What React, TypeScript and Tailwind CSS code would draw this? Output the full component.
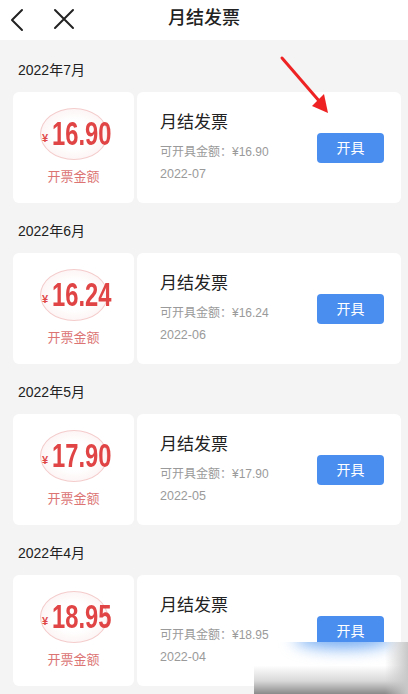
import React from "react";

const invoices = [
  { month: "2022年7月", amount: "16.90", date: "2022-07" },
  { month: "2022年6月", amount: "16.24", date: "2022-06" },
  { month: "2022年5月", amount: "17.90", date: "2022-05" },
  { month: "2022年4月", amount: "18.95", date: "2022-04" },
];

const font = "font-['Liberation_Sans','Noto_Sans_CJK_SC',sans-serif]";

function InvoiceRow({ month, amount, date }: { month: string; amount: string; date: string }) {
  return (
    <div className="pt-[18px]">
      <div className="h-[20px] pl-[18px] text-[14px] leading-[20px] text-[#222]">{month}</div>
      <div className="mt-[12px] flex gap-[3px] pl-[13px] pr-[7px]">
        <div className="flex h-[111px] w-[121px] flex-col items-center rounded-[6px] bg-white">
          <div className="mt-[16px] flex h-[52px] w-[68px] items-center justify-center rounded-[50%] border border-[#f4cccc] bg-[radial-gradient(ellipse_at_center,#fff_40%,#fcecec)]">
            <div className="ml-[6px] flex shrink-0 items-center">
              <span className="mr-[4px] mt-[8px] text-[11px] font-bold text-[#e04848]">¥</span>
              <div className="w-[59px]">
                <span className="inline-block origin-left scale-x-[0.72] whitespace-nowrap text-[33px] font-bold leading-none text-[#e04444]">
                  {amount}
                </span>
              </div>
            </div>
          </div>
          <div className="mt-[8px] text-[13px] leading-[18px] text-[#dc7474]">开票金额</div>
        </div>
        <div className="flex h-[111px] flex-1 items-center rounded-[6px] bg-white pl-[23px] pr-[17px]">
          <div className="flex-1">
            <div className="text-[17px] leading-[22px] text-[#222]">月结发票</div>
            <div className="mt-[10px] text-[12px] leading-[16px] text-[#9a9a9a]">可开具金额：¥{amount}</div>
            <div className="mt-[5px] text-[12.5px] leading-[18px] text-[#9a9a9a]">{date}</div>
          </div>
          <button className="mt-[1px] h-[30px] w-[67px] rounded-[4px] bg-[#4a8ef0] text-[14px] text-white">开具</button>
        </div>
      </div>
    </div>
  );
}

export default function App() {
  return (
    <div className={`relative h-[694px] w-[408px] overflow-hidden bg-[#f4f4f4] ${font}`}>
      {/* top bar */}
      <div className="relative flex h-[40px] items-center bg-white">
        <svg className="ml-[9px]" width="16" height="24" viewBox="0 0 16 24" fill="none">
          <path d="M13 2 L3 12 L13 22" stroke="#222" strokeWidth="2" strokeLinecap="round" strokeLinejoin="round" />
        </svg>
        <svg className="ml-[27px]" width="24" height="24" viewBox="0 0 24 24" fill="none">
          <path d="M3 2 L21 20 M21 2 L3 20" stroke="#222" strokeWidth="2" strokeLinecap="round" />
        </svg>
        <div className="absolute left-0 right-0 top-0 flex h-[37px] items-center justify-center text-[18px] font-medium text-[#222]">
          月结发票
        </div>
      </div>

      <div className="pt-[2px]">
        {invoices.map((inv) => (
          <InvoiceRow key={inv.month} {...inv} />
        ))}
      </div>

      {/* red arrow annotation */}
      <svg className="absolute left-[276px] top-[54px]" width="60" height="64" viewBox="0 0 60 64">
        <path d="M6 4 L44 48" stroke="#ee2222" strokeWidth="3" strokeLinecap="round" />
        <path d="M52 59 L36 52 L48 40 Z" fill="#ee2222" />
      </svg>

      {/* watermark box */}
      <div className="absolute left-[254px] top-[642px] h-[52px] w-[154px] overflow-hidden bg-white">
        <div className="absolute left-[40px] top-[-14px] h-[20px] w-[100px] rounded-[50%] bg-[#6aa6f2] blur-[8px]" />
        <div className="absolute inset-0 bg-[linear-gradient(to_bottom,transparent_45%,#d8d8d8_75%,#8a8a8a)]" />
        <div className="absolute inset-0 bg-[linear-gradient(to_right,transparent_85%,#c8c8c8)]" />
      </div>
    </div>
  );
}
